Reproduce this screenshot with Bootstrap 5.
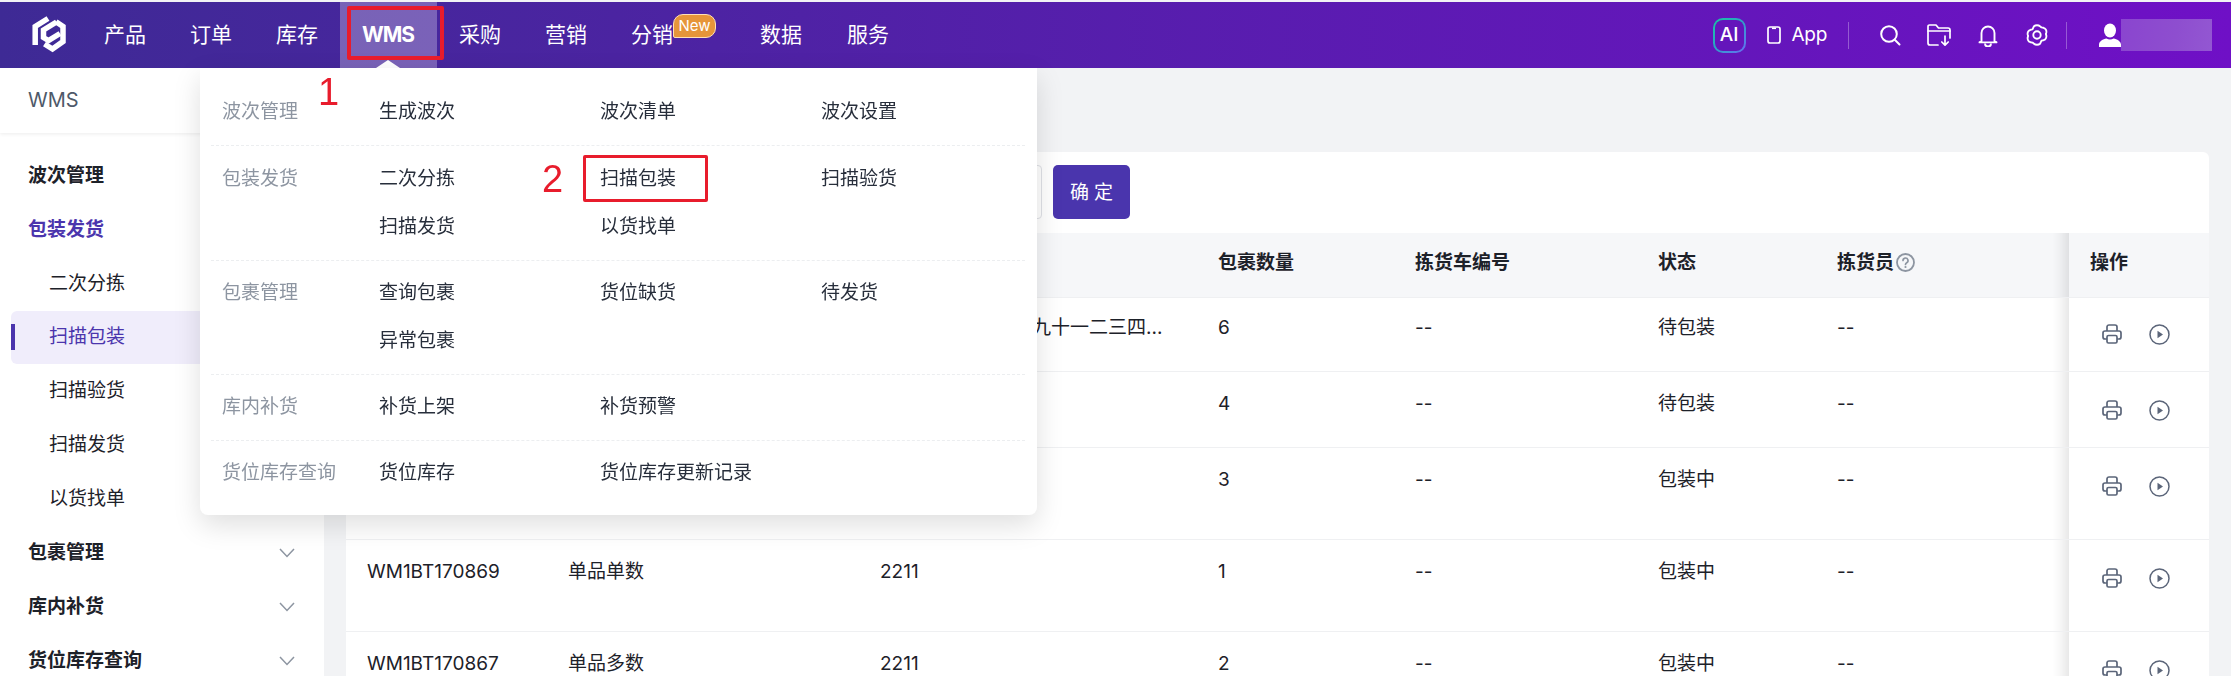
<!DOCTYPE html>
<html lang="zh">
<head>
<meta charset="utf-8">
<title>WMS</title>
<link href="https://cdn.jsdelivr.net/npm/bootstrap@5.3.0/dist/css/bootstrap.min.css" rel="stylesheet">
<style>
html,body{height:676px;overflow:hidden;}
body{background:#f2f3f5;font-family:Inter,"Noto Sans CJK SC",sans-serif;font-size:19px;color:#1d2129;padding-top:2px;}
.topbar{height:66px;background:linear-gradient(90deg,#3e2a95 0%,#4d23a3 32%,#6f10c6 100%);color:#fff;flex-wrap:nowrap;}
.logo-box{width:35px;height:39px;margin:0 16px 0 31px;flex:none;}
.top-item{position:relative;height:66px;padding:0 22px;font-size:21px;color:#fff;display:flex;align-items:center;text-decoration:none;white-space:nowrap;}
.top-item:hover{color:#fff;}
.top-item.is-on{background:rgba(255,255,255,.28);font-weight:700;padding:0 22px;width:97px;letter-spacing:-1px;}
.top-item.is-on::after{content:"";position:absolute;left:36px;bottom:0;border:12px solid transparent;border-top:0;border-bottom:8px solid #fff;}
.new-tag{height:24px;width:43px;margin-top:-18px;background:#e6953a;border:1px solid #ffe0b5;border-radius:10px 10px 10px 2px;font-size:15px;line-height:22px;text-align:center;color:#fff;}
.tag-wrap{padding-right:0;}
.next-after-tag{margin-left:22px;}
.last-top{margin-left:1px;}
.right-tools{margin-right:19px;}
.ai-box{width:33px;height:35px;border-radius:10px;padding:2px;background:linear-gradient(135deg,#16c8a0,#2aa6c4 45%,#6a6cf5);margin-right:21px;}
.ai-box span{display:flex;width:100%;height:100%;align-items:center;justify-content:center;border-radius:8px;background:#6415bb;font-size:19px;font-weight:500;}
.app-txt{font-size:19px;margin-left:11px;margin-right:21px;letter-spacing:-.3px;}
.vsep{width:1px;height:27px;background:rgba(255,255,255,.3);}
.vsep-end{margin-left:5px;margin-right:32px;}
.ico-slot{width:49px;display:flex;justify-content:center;}
.name-blur{width:91px;height:32px;background:linear-gradient(100deg,#8a45cf,#8e4ecf 60%,#9357d2);}
.side-panel{width:324px;height:608px;background:#fff;flex:none;}
.side-head{height:65px;padding-left:28px;line-height:64px;font-size:20px;color:#4e5969;box-shadow:0 1px 4px rgba(0,0,0,.08);margin-bottom:16px;}
.side-row{height:54px;display:flex;align-items:center;padding:0 29px 0 28px;justify-content:space-between;font-weight:700;color:#1d2129;}
.side-row.is-cur{color:#4b35ad;}
.side-sub{height:54px;display:flex;align-items:center;padding-left:49px;color:#1d2129;}
.side-sub.is-cur{position:relative;margin-left:11px;padding-left:38px;height:53px;border-radius:6px;background:#f0edfb;color:#4b35ad;}
.side-sub.is-cur::before{content:"";position:absolute;left:0;top:13px;width:4px;height:26px;background:#4b35ad;}
.main-pane{flex:1;padding:84px 22px 0;min-width:0;}
.sheet{background:#fff;border-radius:6px 6px 0 0;width:1863px;}
.tool-row{height:81px;padding:13px 0 0 0;gap:11px;}
.fake-input{width:560px;height:54px;margin-left:136px;border:1px solid #dfe1e6;border-radius:4px;}
.go-btn{width:77px;height:54px;background:#4a35ad;border:0;border-radius:5px;color:#fff;font-size:19px;letter-spacing:5px;padding:3px 0 0 5px;}
.go-btn:hover{background:#4a35ad;color:#fff;}
.wave-table{table-layout:fixed;width:1863px;margin:0;--bs-table-border-color:#eff0f2;}
.wave-table th{height:64px;background:#f6f7f9;padding:0 0 3px 21px;vertical-align:middle;font-weight:700;white-space:nowrap;color:#1d2129;box-shadow:none;}
.wave-table td{padding:20px 0 0 21px;vertical-align:top;line-height:24px;white-space:nowrap;overflow:hidden;color:#1d2129;box-shadow:none;}
.wave-table tbody tr{height:92px;}
.wave-table tbody tr:nth-child(1){height:74px;}
.wave-table tbody tr:nth-child(1) td{padding-top:18px;}
.wave-table tbody tr:nth-child(2){height:76px;}
.wave-table .op-col{position:sticky;right:0;background:#fff;overflow:visible;}
.wave-table th.op-col{background:#f6f7f9;}
.wave-table .op-col::before{content:"";position:absolute;left:-16px;top:0;bottom:0;width:16px;background:linear-gradient(to left,rgba(0,0,0,.09),rgba(0,0,0,.03) 55%,rgba(0,0,0,0));pointer-events:none;}
.wave-table td.op-col{padding:28px 0 0 33px;}
.wave-table tbody tr:nth-child(1) td.op-col{padding-top:26px;}
.op-icons{display:flex;gap:27px;align-items:center;}
.hint-ico{vertical-align:-3px;margin-left:2px;}
.mega-menu{position:absolute;left:200px;top:68px;width:837px;height:447px;background:#fff;border-radius:0 0 8px 8px;box-shadow:0 10px 28px rgba(0,0,0,.13);padding:20px 12px 0 11px;}
.mega-group{display:flex;border-bottom:1px dashed #eceef0;padding:0 0 9px 11px;margin-bottom:8px;}
.mega-group:first-child{margin-bottom:9px;}
.mega-group:last-child{border-bottom:0;}
.mega-label{width:157px;flex:none;line-height:48px;color:#8d95a1;white-space:nowrap;}
.mega-links{display:grid;grid-template-columns:repeat(3,221px);grid-auto-rows:48px;line-height:48px;}
.mega-links span{position:relative;color:#272e3b;white-space:nowrap;}
.red-box-wrap{position:absolute;left:347px;top:6px;width:97px;height:54px;border:4px solid #e81c2c;border-radius:2px;}
.red-box-b{position:absolute;left:-17px;top:0;width:125px;height:47px;border:3px solid #e81c2c;border-radius:2px;}
.red-num{position:absolute;color:#e81c2c;font-family:"Liberation Sans",sans-serif;font-size:38px;line-height:1;}
.num-one{left:318px;top:73px;}
.num-two{left:542px;top:160px;}
</style>
</head>
<body>
<nav class="navbar topbar p-0 d-flex justify-content-start">
  <svg class="logo-box" viewBox="7 7 35 39" fill="none" stroke="#fff" stroke-width="5.5" stroke-linejoin="miter">
    <path d="M24 9.500 11.200 17.500V36"/>
    <path d="M32.500 13 19.500 21V28.500L24.500 31.500 36 24.500"/>
    <path d="M32 12.800 39 17.500V32.500L28.500 40 20.500 35"/>
  </svg>
  <a class="top-item" href="#">产品</a>
  <a class="top-item" href="#">订单</a>
  <a class="top-item" href="#">库存</a>
  <a class="top-item is-on" href="#">WMS</a>
  <a class="top-item" href="#">采购</a>
  <a class="top-item" href="#">营销</a>
  <a class="top-item tag-wrap" href="#">分销<span class="new-tag">New</span></a>
  <a class="top-item next-after-tag" href="#">数据</a>
  <a class="top-item last-top" href="#">服务</a>
  <div class="d-flex align-items-center ms-auto right-tools">
    <div class="ai-box"><span>AI</span></div>
    <svg width="14" height="18" viewBox="0 0 14 18" fill="none" stroke="#fff" stroke-width="1.7"><rect x="1" y="1" width="12" height="16" rx="2"/><path d="M5 1.500h4v1.600H5z" fill="#fff" stroke="none"/></svg>
    <span class="app-txt">App</span>
    <span class="vsep me-3"></span>
    <span class="ico-slot"><svg width="22" height="22" viewBox="0 0 22 22" fill="none" stroke="#fff" stroke-width="2" stroke-linecap="round"><circle cx="10" cy="10" r="7.800"/><path d="M16 16l4.500 4.500"/></svg></span>
    <span class="ico-slot"><svg width="24" height="23" viewBox="0 0 24 23" fill="none" stroke="#fff" stroke-width="1.7" stroke-linecap="round" stroke-linejoin="round"><path d="M11 21H3a2 2 0 0 1-2-2V2.500C1 1.600 1.600 1 2.500 1H9l2.500 3H21a2 2 0 0 1 2 2v8"/><path d="M1 7h22"/><path d="M18 12v9M14.800 18l3.200 3.200L21.200 18"/></svg></span>
    <span class="ico-slot"><svg width="20" height="23" viewBox="0 0 20 23" fill="none" stroke="#fff" stroke-width="1.9" stroke-linejoin="round"><path d="M3.500 17V9a6.500 6.500 0 0 1 13 0v8l2 1.400H1.500z"/><path d="M7 19.500a3 3 0 0 0 6 0"/></svg></span>
    <span class="ico-slot"><svg width="22" height="22" viewBox="0 0 22 22" fill="none" stroke="#fff" stroke-width="1.9" stroke-linejoin="round"><path d="M8 2.200c1.500-1.300 4.500-1.300 6 0l1.500 1.200 2 .4c1.900.5 3.200 2.700 2.800 4.700l-.4 1.500.4 1.500c.4 2-.9 4.200-2.800 4.700l-2 .4L14 19.800c-1.500 1.300-4.500 1.300-6 0l-1.500-1.200-2-.4c-1.900-.5-3.200-2.700-2.800-4.700l.4-1.500-.4-1.500c-.4-2 .9-4.200 2.800-4.700l2-.4z"/><circle cx="11" cy="11" r="3.700"/></svg></span>
    <span class="vsep vsep-end"></span>
    <svg width="22" height="24" viewBox="0 0 22 24" fill="#fff"><ellipse cx="11" cy="7.500" rx="6" ry="7"/><path d="M0 24v-2.500c0-3 4-5.500 7.500-6 2 1.200 5 1.200 7 0 3.500.5 7.500 3 7.500 6V24z"/></svg>
    <div class="name-blur"></div>
  </div>
</nav>

<div class="d-flex">
  <aside class="side-panel">
    <div class="side-head">WMS</div>
    <div class="side-row">波次管理</div>
    <div class="side-row is-cur">包装发货</div>
    <div class="side-sub">二次分拣</div>
    <div class="side-sub is-cur">扫描包装</div>
    <div class="side-sub">扫描验货</div>
    <div class="side-sub">扫描发货</div>
    <div class="side-sub">以货找单</div>
    <div class="side-row">包裹管理<svg width="16" height="10" viewBox="0 0 16 10" fill="none" stroke="#8d95a1" stroke-width="1.500"><path d="M1 1l7 7.500L15 1"/></svg></div>
    <div class="side-row">库内补货<svg width="16" height="10" viewBox="0 0 16 10" fill="none" stroke="#8d95a1" stroke-width="1.500"><path d="M1 1l7 7.500L15 1"/></svg></div>
    <div class="side-row">货位库存查询<svg width="16" height="10" viewBox="0 0 16 10" fill="none" stroke="#8d95a1" stroke-width="1.500"><path d="M1 1l7 7.500L15 1"/></svg></div>
  </aside>

  <main class="main-pane">
    <div class="sheet">
      <div class="tool-row d-flex">
        <div class="fake-input"></div>
        <button class="btn go-btn" type="button">确定</button>
      </div>
      <table class="table wave-table">
        <colgroup><col style="width:201px"><col style="width:312px"><col style="width:338px"><col style="width:197px"><col style="width:243px"><col style="width:179px"><col style="width:253px"><col style="width:140px"></colgroup>
        <thead>
          <tr><th>波次号</th><th>波次类型</th><th>波次名称</th><th>包裹数量</th><th>拣货车编号</th><th>状态</th><th>拣货员<svg class="hint-ico" width="19" height="19" viewBox="0 0 19 19" fill="none"><circle cx="9.500" cy="9.500" r="8.500" stroke="#8d95a1" stroke-width="1.800"/><path d="M7 7.500a2.500 2.500 0 1 1 3.700 2.200c-.8.500-1.200 1-1.200 1.800" stroke="#8d95a1" stroke-width="1.700" stroke-linecap="round"/><circle cx="9.500" cy="14" r="1.100" fill="#8d95a1"/></svg></th><th class="op-col">操作</th></tr>
        </thead>
        <tbody>
          <tr><td>WM1BT170872</td><td>单品单数</td><td>一二三四五六七八九十一二三四...</td><td>6</td><td>--</td><td>待包装</td><td>--</td><td class="op-col"><div class="op-icons"><svg width="20" height="20" viewBox="0 0 20 20" fill="none" stroke="#5b6579" stroke-width="1.700" stroke-linejoin="round"><path d="M5 7V3a2 2 0 0 1 2-2h6a2 2 0 0 1 2 2v4"/><path d="M5 15H3a2 2 0 0 1-2-2V9a2 2 0 0 1 2-2h14a2 2 0 0 1 2 2v4a2 2 0 0 1-2 2h-2"/><rect x="5" y="11.500" width="10" height="7.500" rx="1.500"/></svg><svg width="21" height="21" viewBox="0 0 21 21" fill="none"><circle cx="10.500" cy="10.500" r="9.500" stroke="#5b6579" stroke-width="1.500"/><path d="M8.500 6.700l5.500 3.800-5.500 3.800z" fill="#5b6579"/></svg></div></td></tr>
          <tr><td>WM1BT170871</td><td>单品多数</td><td>2211</td><td>4</td><td>--</td><td>待包装</td><td>--</td><td class="op-col"><div class="op-icons"><svg width="20" height="20" viewBox="0 0 20 20" fill="none" stroke="#5b6579" stroke-width="1.700" stroke-linejoin="round"><path d="M5 7V3a2 2 0 0 1 2-2h6a2 2 0 0 1 2 2v4"/><path d="M5 15H3a2 2 0 0 1-2-2V9a2 2 0 0 1 2-2h14a2 2 0 0 1 2 2v4a2 2 0 0 1-2 2h-2"/><rect x="5" y="11.500" width="10" height="7.500" rx="1.500"/></svg><svg width="21" height="21" viewBox="0 0 21 21" fill="none"><circle cx="10.500" cy="10.500" r="9.500" stroke="#5b6579" stroke-width="1.500"/><path d="M8.500 6.700l5.500 3.800-5.500 3.800z" fill="#5b6579"/></svg></div></td></tr>
          <tr><td>WM1BT170870</td><td>单品单数</td><td>2211</td><td>3</td><td>--</td><td>包装中</td><td>--</td><td class="op-col"><div class="op-icons"><svg width="20" height="20" viewBox="0 0 20 20" fill="none" stroke="#5b6579" stroke-width="1.700" stroke-linejoin="round"><path d="M5 7V3a2 2 0 0 1 2-2h6a2 2 0 0 1 2 2v4"/><path d="M5 15H3a2 2 0 0 1-2-2V9a2 2 0 0 1 2-2h14a2 2 0 0 1 2 2v4a2 2 0 0 1-2 2h-2"/><rect x="5" y="11.500" width="10" height="7.500" rx="1.500"/></svg><svg width="21" height="21" viewBox="0 0 21 21" fill="none"><circle cx="10.500" cy="10.500" r="9.500" stroke="#5b6579" stroke-width="1.500"/><path d="M8.500 6.700l5.500 3.800-5.500 3.800z" fill="#5b6579"/></svg></div></td></tr>
          <tr><td>WM1BT170869</td><td>单品单数</td><td>2211</td><td>1</td><td>--</td><td>包装中</td><td>--</td><td class="op-col"><div class="op-icons"><svg width="20" height="20" viewBox="0 0 20 20" fill="none" stroke="#5b6579" stroke-width="1.700" stroke-linejoin="round"><path d="M5 7V3a2 2 0 0 1 2-2h6a2 2 0 0 1 2 2v4"/><path d="M5 15H3a2 2 0 0 1-2-2V9a2 2 0 0 1 2-2h14a2 2 0 0 1 2 2v4a2 2 0 0 1-2 2h-2"/><rect x="5" y="11.500" width="10" height="7.500" rx="1.500"/></svg><svg width="21" height="21" viewBox="0 0 21 21" fill="none"><circle cx="10.500" cy="10.500" r="9.500" stroke="#5b6579" stroke-width="1.500"/><path d="M8.500 6.700l5.500 3.800-5.500 3.800z" fill="#5b6579"/></svg></div></td></tr>
          <tr><td>WM1BT170867</td><td>单品多数</td><td>2211</td><td>2</td><td>--</td><td>包装中</td><td>--</td><td class="op-col"><div class="op-icons"><svg width="20" height="20" viewBox="0 0 20 20" fill="none" stroke="#5b6579" stroke-width="1.700" stroke-linejoin="round"><path d="M5 7V3a2 2 0 0 1 2-2h6a2 2 0 0 1 2 2v4"/><path d="M5 15H3a2 2 0 0 1-2-2V9a2 2 0 0 1 2-2h14a2 2 0 0 1 2 2v4a2 2 0 0 1-2 2h-2"/><rect x="5" y="11.500" width="10" height="7.500" rx="1.500"/></svg><svg width="21" height="21" viewBox="0 0 21 21" fill="none"><circle cx="10.500" cy="10.500" r="9.500" stroke="#5b6579" stroke-width="1.500"/><path d="M8.500 6.700l5.500 3.800-5.500 3.800z" fill="#5b6579"/></svg></div></td></tr>
        </tbody>
      </table>
    </div>
  </main>
</div>

<div class="mega-menu">
  <div class="mega-group"><div class="mega-label">波次管理</div><div class="mega-links"><span>生成波次</span><span>波次清单</span><span>波次设置</span></div></div>
  <div class="mega-group"><div class="mega-label">包装发货</div><div class="mega-links"><span>二次分拣</span><span>扫描包装<i class="red-box-b"></i></span><span>扫描验货</span><span>扫描发货</span><span>以货找单</span></div></div>
  <div class="mega-group"><div class="mega-label">包裹管理</div><div class="mega-links"><span>查询包裹</span><span>货位缺货</span><span>待发货</span><span>异常包裹</span></div></div>
  <div class="mega-group"><div class="mega-label">库内补货</div><div class="mega-links"><span>补货上架</span><span>补货预警</span></div></div>
  <div class="mega-group"><div class="mega-label">货位库存查询</div><div class="mega-links"><span>货位库存</span><span>货位库存更新记录</span></div></div>
</div>
<div class="red-box-wrap"></div>
<div class="red-num num-one">1</div>
<div class="red-num num-two">2</div>
<script src="https://cdn.jsdelivr.net/npm/bootstrap@5.3.0/dist/js/bootstrap.bundle.min.js"></script>
</body>
</html>
